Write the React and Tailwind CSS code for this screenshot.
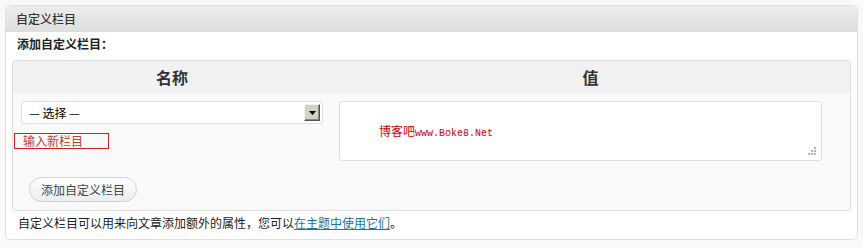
import React from "react";

const cjk = "font-['Noto_Sans_CJK_SC',sans-serif]";

function SelectBox() {
  return (
    <div className="flex h-[23px] w-[302px] items-center justify-between rounded-[3px] border border-[#dfdfdf] bg-white pl-[7px] pr-[2px]">
      <span className="text-[12px] leading-none text-black">— 选择 —</span>
      <span className="flex h-[17px] w-[16px] items-center justify-center border border-t-[#f4f3ee] border-l-[#f4f3ee] border-r-[#555] border-b-[#555] bg-[#d4d0c8] shadow-[inset_-1px_-1px_0_#888]">
        <svg width="7" height="4" viewBox="0 0 7 4">
          <path d="M0 0h7L3.5 4z" fill="#000" />
        </svg>
      </span>
    </div>
  );
}

function ResizeGrip() {
  return (
    <svg width="10" height="10" viewBox="0 0 10 10" className="absolute bottom-[4px] right-[4px]">
      <rect x="7" y="1" width="2" height="2" fill="#b5b5b5" />
      <rect x="4" y="4" width="2" height="2" fill="#b5b5b5" />
      <rect x="7" y="4" width="2" height="2" fill="#b5b5b5" />
      <rect x="1" y="7" width="2" height="2" fill="#b5b5b5" />
      <rect x="4" y="7" width="2" height="2" fill="#b5b5b5" />
      <rect x="7" y="7" width="2" height="2" fill="#b5b5b5" />
    </svg>
  );
}

export default function App() {
  return (
    <div className={`min-h-[248px] w-[863px] bg-[#f9f9f9] pl-[5px] pt-[5px] ${cjk}`}>
      <div className="flex h-[235px] w-[853px] flex-col overflow-hidden rounded-[6px] border border-[#dfdfdf] bg-white">
        <div className="flex h-[26px] items-center bg-gradient-to-b from-[#ececec] to-[#dedede] pl-[10px]">
          <span className="text-[12px] font-medium leading-none text-[#333]">自定义栏目</span>
        </div>

        <div className="flex flex-col pl-[6px] pr-[6px]">
          <p className="mt-[4px] mb-[8px] pl-[5px] text-[12px] font-bold leading-[16px] text-[#222]">
            添加自定义栏目：
          </p>

          <div className="w-[839px] overflow-hidden rounded-[3px] border border-[#dfdfdf] bg-[#f9f9f9]">
            <div className="flex h-[32px] items-center bg-[#f1f1f1]">
              <div className="w-[318px] text-center text-[16px] font-bold text-[#333]">名称</div>
              <div className="flex-1 text-center text-[16px] font-bold text-[#333]">值</div>
            </div>
            <div className="flex h-[117px]">
              <div className="flex w-[318px] flex-col">
                <div className="mt-[8px] pl-[8px]">
                  <SelectBox />
                </div>
                <div className="mt-[9px] ml-[1px] flex h-[16px] w-[95px] items-center border border-[#cc1f1f] pl-[8px] text-[12px] leading-none text-[#b4462f]">
                  输入新栏目
                </div>
                <div className="mt-[28px] ml-[16px]">
                  <button className="flex h-[25px] w-[108px] items-center justify-center rounded-full border border-[#d4d4d4] bg-gradient-to-b from-white to-[#ececec] text-[12px] text-[#464646]">
                    添加自定义栏目
                  </button>
                </div>
              </div>
              <div className="flex-1 pl-[8px] pt-[8px]">
                <div className="relative h-[60px] w-[483px] rounded-[3px] border border-[#dfdfdf] bg-white pl-[39px] pt-[21px] text-[12px] leading-[16px] text-[#d00000]">
                  <span>博客吧</span>
                  <span className="font-['Liberation_Mono',monospace] text-[10px]">www.Boke8.Net</span>
                  <ResizeGrip />
                </div>
              </div>
            </div>
          </div>

          <p className="mt-[4px] pl-[6px] text-[12px] leading-[16px] text-[#222]">
            自定义栏目可以用来向文章添加额外的属性，您可以
            <a href="#" className="text-[#21759b] underline">在主题中使用它们</a>。
          </p>
        </div>
      </div>
    </div>
  );
}
